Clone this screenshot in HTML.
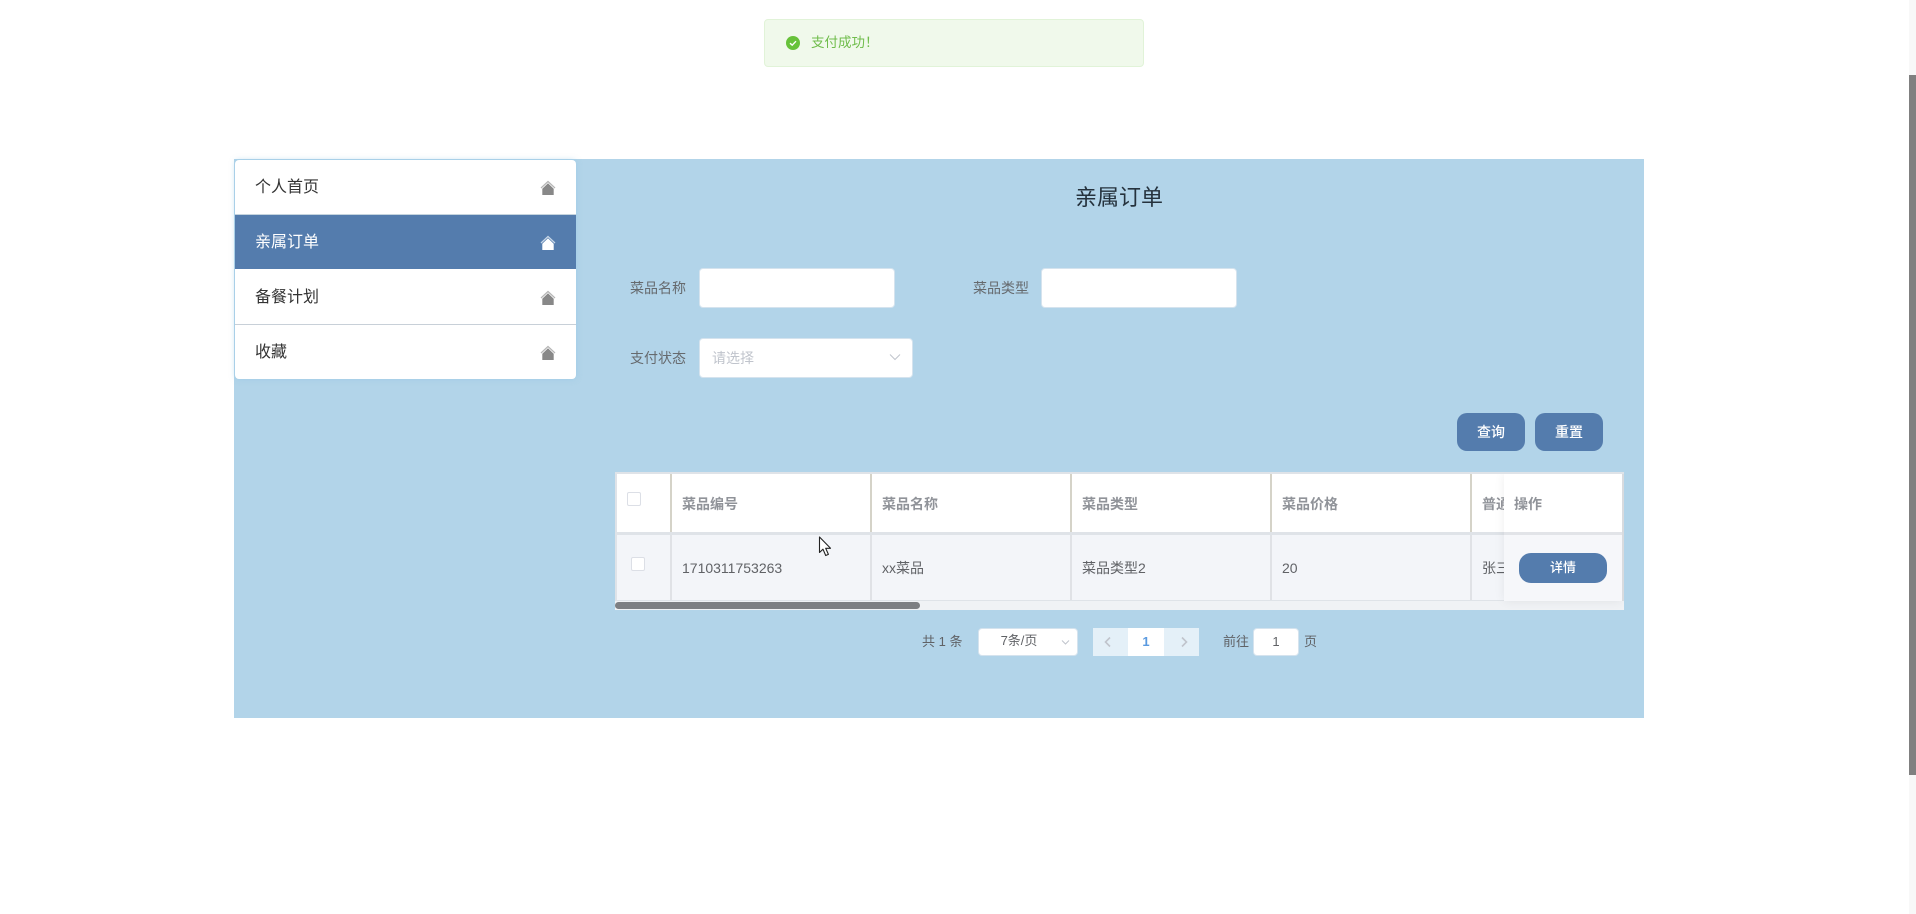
<!DOCTYPE html>
<html lang="zh">
<head>
<meta charset="utf-8">
<title>亲属订单</title>
<style>
html,body{margin:0;padding:0;width:1916px;height:914px;overflow:hidden;background:#fff;}
body{position:relative;font-family:"Liberation Sans","Noto Sans CJK SC",sans-serif;}
.a{position:absolute;box-sizing:border-box;white-space:nowrap;}
.t{position:absolute;white-space:nowrap;line-height:20px;}
.nav{position:absolute;left:235px;width:341px;height:54px;background:#fff;color:#333;font-size:16px;line-height:56px;padding-left:20px;box-sizing:border-box;}
.nav svg{position:absolute;left:305px;top:20px;}
.inp{position:absolute;background:#fff;border:1px solid #d5e3ee;border-radius:4px;box-sizing:border-box;}
.lab{position:absolute;font-size:14px;color:#666a6e;line-height:20px;white-space:nowrap;}
.btn{position:absolute;background:#547cad;color:#fff;border-radius:10px;text-align:center;font-size:14px;font-weight:500;line-height:38px;top:413px;width:68px;height:38px;}
.th{position:absolute;top:494px;font-size:14px;font-weight:bold;color:#909399;line-height:20px;white-space:nowrap;}
.td{position:absolute;top:558px;font-size:14px;color:#606266;line-height:20px;white-space:nowrap;}
.cb{position:absolute;width:14px;height:14px;background:#fff;border:1px solid #dcdfe6;border-radius:2px;box-sizing:border-box;}
.v{position:absolute;width:2px;}
</style>
</head>
<body>

<!-- toast -->
<div class="a" style="left:764px;top:19px;width:380px;height:48px;background:#f0f9eb;border:1px solid #e1f3d8;border-radius:4px;"></div>
<svg class="a" style="left:786px;top:36px" width="14" height="14" viewBox="0 0 14 14"><circle cx="7" cy="7" r="7" fill="#67c23a"/><path d="M4 7.2l2.2 2L10 5.2" fill="none" stroke="#fff" stroke-width="1.4"/></svg>
<div class="t" style="left:811px;top:33px;font-size:13.5px;color:#70bd4c;">支付成功！</div>

<!-- main panel -->
<div class="a" style="left:234px;top:159px;width:1410px;height:559px;background:#b2d4e9;"></div>

<!-- sidebar -->
<div class="a" style="left:235px;top:160px;width:341px;height:219px;background:#fff;border-radius:4px;box-shadow:0 0 6px rgba(140,195,230,.5);"></div>
<div class="nav" style="top:160px;background:transparent;">个人首页<svg width="16" height="16" viewBox="0 0 16 16"><path d="M1 8L8 1.5 15 8" fill="none" stroke="#b5b5b5" stroke-width="1.2"/><path d="M2.3 8.8L8 3.2 13.7 8.8V15H2.3z" fill="#888"/></svg></div>
<div class="a" style="left:235px;top:214px;width:341px;height:1px;background:#c5d4de;"></div>
<div class="nav" style="top:215px;background:#547cad;color:#fff;">亲属订单<svg width="16" height="16" viewBox="0 0 16 16"><path d="M1 8L8 1.5 15 8" fill="none" stroke="#c8d8e8" stroke-width="1.2"/><path d="M2.3 8.8L8 3.2 13.7 8.8V15H2.3z" fill="#fff"/></svg></div>
<div class="nav" style="top:270px;background:transparent;">备餐计划<svg width="16" height="16" viewBox="0 0 16 16"><path d="M1 8L8 1.5 15 8" fill="none" stroke="#b5b5b5" stroke-width="1.2"/><path d="M2.3 8.8L8 3.2 13.7 8.8V15H2.3z" fill="#888"/></svg></div>
<div class="a" style="left:235px;top:324px;width:341px;height:1px;background:#c8d0d8;"></div>
<div class="nav" style="top:325px;background:transparent;border-radius:0 0 4px 4px;">收藏<svg width="16" height="16" viewBox="0 0 16 16"><path d="M1 8L8 1.5 15 8" fill="none" stroke="#b5b5b5" stroke-width="1.2"/><path d="M2.3 8.8L8 3.2 13.7 8.8V15H2.3z" fill="#888"/></svg></div>

<!-- title -->
<div class="t" style="left:1075px;top:184px;width:88px;text-align:center;font-size:22px;line-height:28px;color:#25323d;">亲属订单</div>

<!-- filters -->
<div class="lab" style="left:630px;top:278px;">菜品名称</div>
<div class="inp" style="left:699px;top:268px;width:196px;height:40px;"></div>
<div class="lab" style="left:973px;top:278px;">菜品类型</div>
<div class="inp" style="left:1041px;top:268px;width:196px;height:40px;"></div>
<div class="lab" style="left:630px;top:348px;">支付状态</div>
<div class="inp" style="left:699px;top:338px;width:214px;height:40px;"></div>
<div class="t" style="left:712px;top:348px;font-size:14px;color:#c0c4cc;">请选择</div>
<svg class="a" style="left:889px;top:353px" width="12" height="9" viewBox="0 0 12 9"><path d="M1 1.5L6 6.5 11 1.5" fill="none" stroke="#c0c4cc" stroke-width="1"/></svg>

<!-- buttons -->
<div class="btn" style="left:1457px;">查询</div>
<div class="btn" style="left:1535px;">重置</div>

<!-- table -->
<div class="a" style="left:615px;top:472px;width:1009px;height:130px;background:#dfe3e8;"></div>
<div class="a" style="left:617px;top:474px;width:1005px;height:58px;background:#fff;"></div>
<div class="a" style="left:617px;top:535px;width:1005px;height:65px;background:#f3f5f9;"></div>
<div class="v" style="left:670px;top:474px;height:58px;background:#d5d3c8;"></div>
<div class="v" style="left:870px;top:474px;height:58px;background:#d5d3c8;"></div>
<div class="v" style="left:1070px;top:474px;height:58px;background:#d5d3c8;"></div>
<div class="v" style="left:1270px;top:474px;height:58px;background:#d5d3c8;"></div>
<div class="v" style="left:1470px;top:474px;height:58px;background:#d5d3c8;"></div>
<div class="v" style="left:670px;top:535px;height:65px;background:#e0e2e6;"></div>
<div class="v" style="left:870px;top:535px;height:65px;background:#e0e2e6;"></div>
<div class="v" style="left:1070px;top:535px;height:65px;background:#e0e2e6;"></div>
<div class="v" style="left:1270px;top:535px;height:65px;background:#e0e2e6;"></div>
<div class="v" style="left:1470px;top:535px;height:65px;background:#e0e2e6;"></div>
<div class="cb" style="left:627px;top:492px;"></div>
<div class="cb" style="left:631px;top:557px;"></div>
<div class="th" style="left:682px;">菜品编号</div>
<div class="th" style="left:882px;">菜品名称</div>
<div class="th" style="left:1082px;">菜品类型</div>
<div class="th" style="left:1282px;">菜品价格</div>
<div class="th" style="left:1482px;">普通用户</div>
<div class="td" style="left:682px;">1710311753263</div>
<div class="td" style="left:882px;">xx菜品</div>
<div class="td" style="left:1082px;">菜品类型2</div>
<div class="td" style="left:1282px;">20</div>
<div class="td" style="left:1482px;">张三</div>

<!-- scrollbar of table -->
<div class="a" style="left:615px;top:601px;width:1009px;height:9px;background:#f0f2f5;"></div>
<div class="a" style="left:615px;top:602px;width:305px;height:7px;background:#7d7f83;border-radius:4px;"></div>

<!-- fixed column -->
<div class="a" style="left:1504px;top:474px;width:118px;height:127px;background:#f6f7fa;box-shadow:0 0 10px rgba(0,0,0,.07);clip-path:inset(0 -2px -12px -12px);"></div>
<div class="a" style="left:1504px;top:474px;width:118px;height:58px;background:#fff;"></div>
<div class="a" style="left:1504px;top:532px;width:118px;height:3px;background:#e2e4e8;"></div>
<div class="a" style="left:1622px;top:474px;width:2px;height:127px;background:#d8dbdf;"></div>
<div class="th" style="left:1514px;">操作</div>
<div class="a" style="left:1519px;top:553px;width:88px;height:30px;background:#547cad;border-radius:12px;color:#fff;font-size:13px;font-weight:500;text-align:center;line-height:30px;">详情</div>

<!-- pagination -->
<div class="t" style="left:922px;top:632px;font-size:13px;color:#606266;">共 1 条</div>
<div class="inp" style="left:978px;top:628px;width:100px;height:28px;"></div>
<div class="t" style="left:978px;top:631px;width:82px;text-align:center;font-size:13px;color:#606266;">7条/页</div>
<svg class="a" style="left:1061px;top:639px" width="9" height="7" viewBox="0 0 9 7"><path d="M1 1.5L4.5 5 8 1.5" fill="none" stroke="#c0c4cc" stroke-width="1"/></svg>
<div class="a" style="left:1093px;top:628px;width:35px;height:28px;background:#e4f0f8;"></div>
<svg class="a" style="left:1103px;top:636px" width="9" height="12" viewBox="0 0 9 12"><path d="M7 1.5L2.5 6 7 10.5" fill="none" stroke="#c0c4cc" stroke-width="1.6"/></svg>
<div class="a" style="left:1128px;top:628px;width:36px;height:28px;background:#fff;color:#5a9ae0;font-size:13px;font-weight:bold;text-align:center;line-height:28px;">1</div>
<div class="a" style="left:1164px;top:628px;width:35px;height:28px;background:#e4f0f8;"></div>
<svg class="a" style="left:1180px;top:636px" width="9" height="12" viewBox="0 0 9 12"><path d="M2 1.5L6.5 6 2 10.5" fill="none" stroke="#c0c4cc" stroke-width="1.6"/></svg>
<div class="t" style="left:1223px;top:632px;font-size:13px;color:#606266;">前往</div>
<div class="inp" style="left:1253px;top:628px;width:46px;height:28px;text-align:center;font-size:13px;color:#606266;line-height:26px;">1</div>
<div class="t" style="left:1304px;top:632px;font-size:13px;color:#606266;">页</div>

<!-- mouse cursor -->
<svg class="a" style="left:818px;top:536px" width="16" height="21" viewBox="0 0 16 21"><path d="M1.5 1V16.5L5 13.2 7.7 19.5 10.4 18.4 7.7 12.3H12.5z" fill="#fff" stroke="#222" stroke-width="1.1" stroke-linejoin="round"/></svg>

<!-- page scrollbar -->
<div class="a" style="left:1909px;top:0;width:7px;height:914px;background:#f8f8f8;"></div>
<div class="a" style="left:1909px;top:75px;width:7px;height:700px;background:#808080;"></div>

</body>
</html>
